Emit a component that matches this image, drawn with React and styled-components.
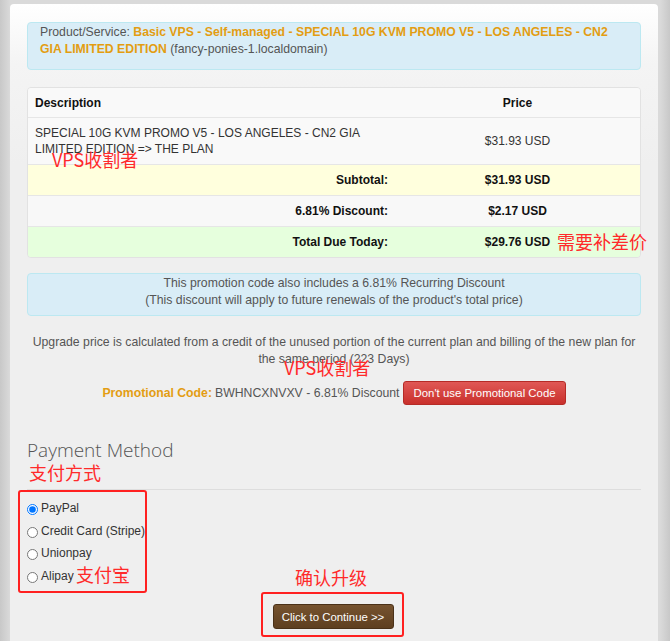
import React from "react";
import styled, { createGlobalStyle } from "styled-components";

const GlobalStyle = createGlobalStyle`
  html, body {
    margin: 0;
    padding: 0;
    background: #d2d2d2;
    font-family: "Liberation Sans", Arial, sans-serif;
    font-size: 12px;
    color: #444;
  }
`;

const Page = styled.div`
  position: relative;
  padding: 4px 12px 0 10px;
  height: 641px;
  box-sizing: border-box;
  overflow: hidden;
  background: linear-gradient(to right, #c8c8c8, #dadada 10px, #dadada 660px, #c8c8c8);
`;

const Panel = styled.div`
  background: linear-gradient(#ffffff, #f4f4f4 60px, #efefef 160px);
  border-radius: 4px 4px 0 0;
  padding: 18px 17px 40px;
  min-height: 100%;
  box-sizing: border-box;
`;

const InfoBox = styled.div`
  background: #d9edf7;
  border: 1px solid #bce8f1;
  border-radius: 4px;
  color: #555;
  font-size: 12.25px;
  line-height: 17px;
  padding: ${({ center }) => (center ? "1px 10px 6px" : "1px 12px 11px")};
  text-align: ${({ center }) => (center ? "center" : "left")};
  margin-bottom: ${({ gap }) => gap}px;
`;

const Accent = styled.span`
  color: #e39d12;
  font-weight: bold;
`;

const Table = styled.div`
  border: 1px solid #e2e2e2;
  border-radius: 4px;
  overflow: hidden;
  margin-bottom: 15px;
`;

const Row = styled.div`
  display: grid;
  grid-template-columns: 1fr 245px;
  align-items: center;
  height: ${({ h }) => h}px;
  background: ${({ bg }) => bg};
  border-top: ${({ first }) => (first ? "none" : "1px solid #e6e6e6")};
  box-sizing: border-box;
  font-size: 12px;
  color: ${({ bold }) => (bold ? "#111" : "#333")};
  font-weight: ${({ bold }) => (bold ? "bold" : "normal")};
`;

const Cell = styled.div`
  padding: 0 7px;
  text-align: ${({ align }) => align || "left"};
  line-height: 16px;
`;

const PriceCell = styled.div`
  text-align: center;
`;

const Note = styled.p`
  margin: 18px 0 0;
  text-align: center;
  color: #555;
  font-size: 12.25px;
  line-height: 17px;
`;

const PromoLine = styled.div`
  display: flex;
  justify-content: center;
  align-items: center;
  gap: 3px;
  margin-top: 13px;
  font-size: 12.25px;
  color: #555;
`;

const RedButton = styled.button`
  height: 24px;
  background: linear-gradient(#e05855, #c9302c);
  border: 1px solid #b52b27;
  border-radius: 3px;
  color: #fff;
  font-family: inherit;
  font-size: 11.4px;
  padding: 0 9px;
  margin-left: 1px;
`;

const Heading = styled.h3`
  margin: 32px 0 0;
  font-family: "Open Sans", sans-serif;
  font-weight: 300;
  font-size: 19px;
  color: #555;
  line-height: 26px;
`;

const Rule = styled.hr`
  border: none;
  border-top: 1px solid #ddd;
  margin: 26px 0 9px;
`;

const Options = styled.div`
  display: flex;
  flex-direction: column;
  gap: 4.7px;
`;

const Option = styled.label`
  display: flex;
  align-items: center;
  font-size: 12px;
  color: #333;
  height: 18px;
  input {
    margin: 3px 3px 0 0;
    width: 11px;
    height: 11px;
  }
`;

const Actions = styled.div`
  display: flex;
  justify-content: center;
  margin-top: 19px;
  padding-right: 2px;
`;

const BrownButton = styled.button`
  width: 121px;
  height: 25px;
  background: linear-gradient(#76532f, #5e3f20);
  border: 1px solid #4a3118;
  border-radius: 3px;
  color: #fff;
  font-family: inherit;
  font-size: 11.4px;
  padding: 0;
`;

const Annotation = styled.span`
  position: absolute;
  left: ${({ x }) => x}px;
  top: ${({ y }) => y}px;
  color: #ff2a2a;
  font-family: "Noto Sans CJK SC", "Liberation Sans", sans-serif;
  font-size: 18px;
  line-height: 1;
  white-space: nowrap;
  pointer-events: none;
`;

const Frame = styled.div`
  position: absolute;
  left: ${({ x }) => x}px;
  top: ${({ y }) => y}px;
  width: ${({ w }) => w}px;
  height: ${({ h }) => h}px;
  border: 2px solid #ff2020;
  border-radius: 3px;
  box-sizing: border-box;
  pointer-events: none;
`;

export default function App() {
  return (
    <>
      <GlobalStyle />
      <Page>
        <Panel>
          <InfoBox gap={17}>
            Product/Service:{" "}
            <Accent>
              Basic VPS - Self-managed - SPECIAL 10G KVM PROMO V5 - LOS ANGELES - CN2 GIA
              LIMITED EDITION
            </Accent>{" "}
            (fancy-ponies-1.localdomain)
          </InfoBox>

          <Table>
            <Row h={29} bg="#f9f9f9" bold first>
              <Cell>Description</Cell>
              <PriceCell>Price</PriceCell>
            </Row>
            <Row h={47} bg="#f9f9f9">
              <Cell>
                SPECIAL 10G KVM PROMO V5 - LOS ANGELES - CN2 GIA
                <br />
                LIMITED EDITION =&gt; THE PLAN
              </Cell>
              <PriceCell>$31.93 USD</PriceCell>
            </Row>
            <Row h={31} bg="#ffffdd" bold>
              <Cell align="right">Subtotal:</Cell>
              <PriceCell>$31.93 USD</PriceCell>
            </Row>
            <Row h={31} bg="#f8f8f8" bold>
              <Cell align="right">6.81% Discount:</Cell>
              <PriceCell>$2.17 USD</PriceCell>
            </Row>
            <Row h={31} bg="#e6ffdd" bold>
              <Cell align="right">Total Due Today:</Cell>
              <PriceCell>$29.76 USD</PriceCell>
            </Row>
          </Table>

          <InfoBox center gap={0}>
            This promotion code also includes a 6.81% Recurring Discount
            <br />
            (This discount will apply to future renewals of the product's total price)
          </InfoBox>

          <Note>
            Upgrade price is calculated from a credit of the unused portion of the current plan
            and billing of the new plan for the same period (223 Days)
          </Note>

          <PromoLine>
            <Accent>Promotional Code:</Accent> BWHNCXNVXV - 6.81% Discount
            <RedButton>Don't use Promotional Code</RedButton>
          </PromoLine>

          <Heading>Payment Method</Heading>
          <Rule />

          <Options>
            <Option>
              <input type="radio" name="pay" defaultChecked /> PayPal
            </Option>
            <Option>
              <input type="radio" name="pay" /> Credit Card (Stripe)
            </Option>
            <Option>
              <input type="radio" name="pay" /> Unionpay
            </Option>
            <Option>
              <input type="radio" name="pay" /> Alipay
            </Option>
          </Options>

          <Actions>
            <BrownButton>Click to Continue &gt;&gt;</BrownButton>
          </Actions>
        </Panel>

        <Annotation x={52} y={150}>VPS收割者</Annotation>
        <Annotation x={557} y={232}>需要补差价</Annotation>
        <Annotation x={284} y={358}>VPS收割者</Annotation>
        <Annotation x={29} y={463}>支付方式</Annotation>
        <Annotation x={76} y={565}>支付宝</Annotation>
        <Annotation x={295} y={568}>确认升级</Annotation>
        <Frame x={18} y={490} w={129} h={103} />
        <Frame x={261} y={592} w={143} h={45} />
      </Page>
    </>
  );
}
